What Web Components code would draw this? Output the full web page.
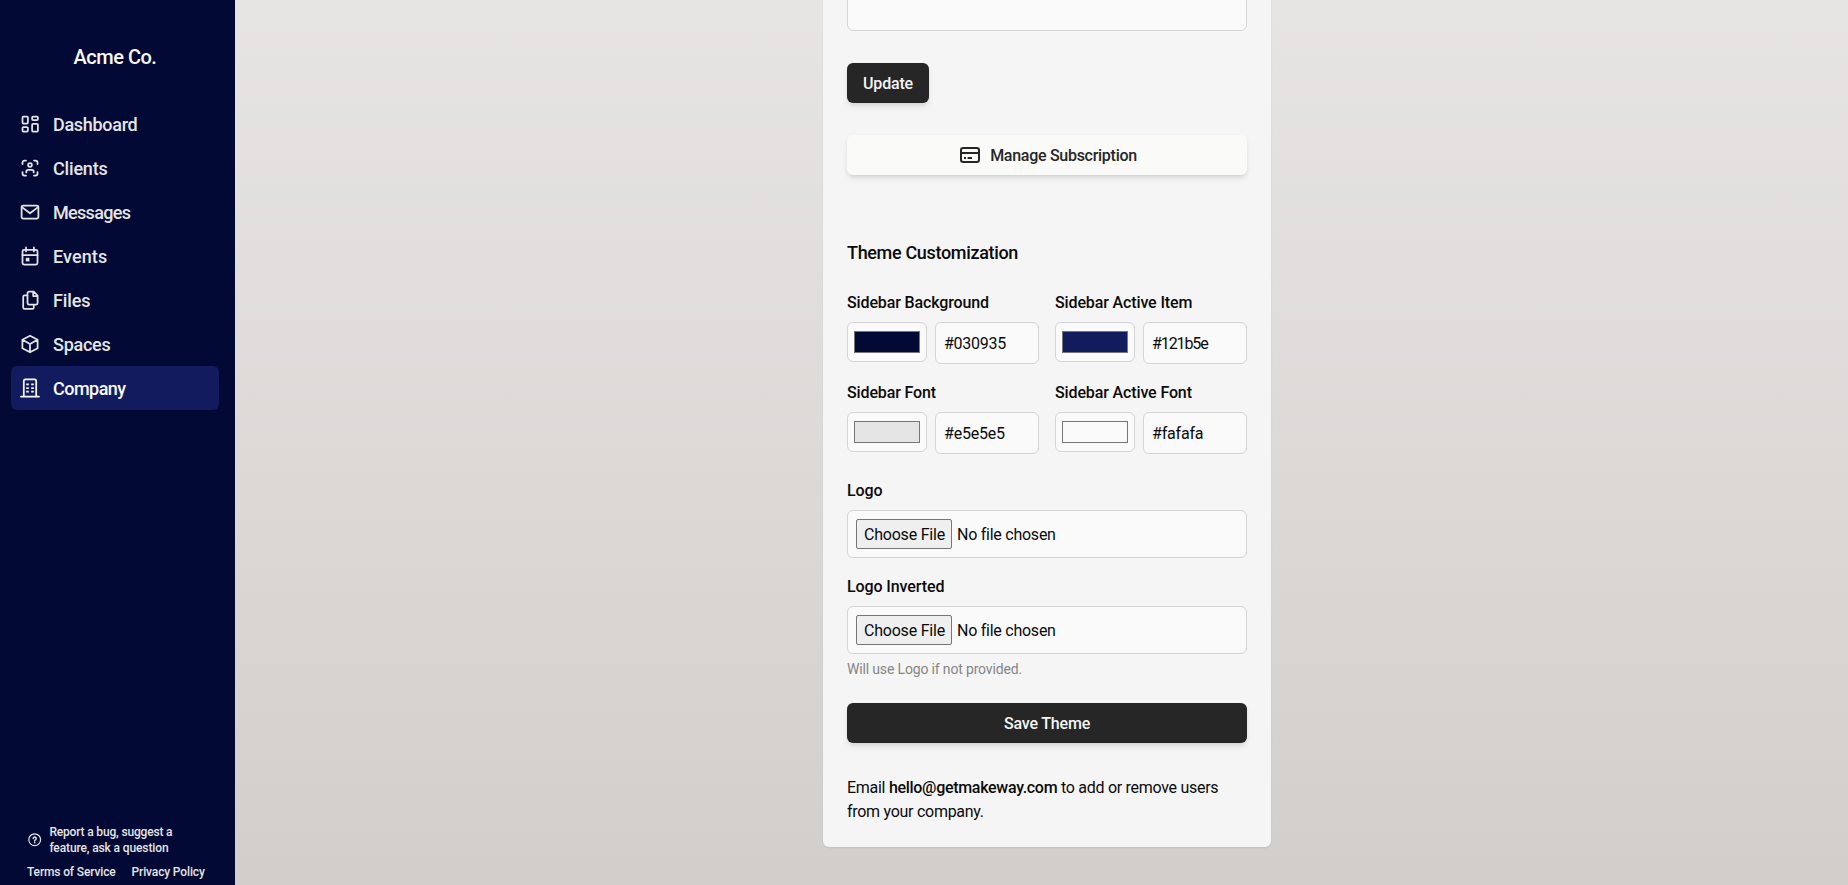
<!DOCTYPE html>
<html lang="en">
<head>
<meta charset="utf-8">
<title>Company</title>
<style>
    html, body {
        margin: 0;
        height: 100%;
        overflow: hidden;
    }
    body {
        font-family: Roboto, "Liberation Sans", sans-serif;
        font-size: 16px;
        line-height: 24px;
        color: #0a0a0a;
    }
</style>
</head>
<body>
<app-shell>
    <side-bar slot="sidebar" company="Acme Co.">
        <nav-item icon="dashboard" style="letter-spacing:-.3px">Dashboard</nav-item>
        <nav-item icon="clients" style="letter-spacing:-.18px">Clients</nav-item>
        <nav-item icon="messages" style="letter-spacing:-.68px">Messages</nav-item>
        <nav-item icon="events" style="letter-spacing:.1px">Events</nav-item>
        <nav-item icon="files" style="letter-spacing:-.1px">Files</nav-item>
        <nav-item icon="spaces" style="letter-spacing:-.25px">Spaces</nav-item>
        <nav-item icon="company" active style="letter-spacing:-.53px">Company</nav-item>
    </side-bar>
    <settings-card></settings-card>
</app-shell>

<script>
const ICONS = {
    dashboard: `<rect x="2.5" y="2.5" width="5.4" height="7" rx="1"/><rect x="2.5" y="13.1" width="5.4" height="4.4" rx="1"/>
        <rect x="12.1" y="2.5" width="5.8" height="3.6" rx="1"/><rect x="12.1" y="9.8" width="5.8" height="7.7" rx="1"/>`,
    clients: `<path d="M2.5 6V4.5a2 2 0 0 1 2-2H6M14 2.5h1.5a2 2 0 0 1 2 2V6M17.5 14v1.5a2 2 0 0 1-2 2H14M6 17.5H4.5a2 2 0 0 1-2-2V14"/>
        <circle cx="10" cy="7" r="1.9"/><path d="M6.3 14.4v-.6a2 2 0 0 1 2-2h3.4a2 2 0 0 1 2 2v.6"/>`,
    messages: `<rect x="1.6" y="3.5" width="16.8" height="13.2" rx="1.6"/><path d="M2.2 5.4 10 11.3l7.8-5.9"/>`,
    events: `<rect x="2.5" y="3.8" width="15" height="14.8" rx="1.6"/><path d="M2.5 9.2h15M6 1.4v4M13.9 1.4v4"/>
        <rect x="5.8" y="11.8" width="3.6" height="3.6" fill="currentColor" stroke="none"/>`,
    files: `<path d="M9 1.6h4.8l3.8 3.9V13a1.5 1.5 0 0 1-1.5 1.5H9A1.5 1.5 0 0 1 7.5 13V3.1A1.5 1.5 0 0 1 9 1.6zM13.2 1.8v4.3h4.2"/>
        <path d="M7.3 5.3H4.7a1.5 1.5 0 0 0-1.5 1.5v10.6a1.5 1.5 0 0 0 1.5 1.5h7.6a1.5 1.5 0 0 0 1.5-1.5v-2.6"/>`,
    spaces: `<path d="m10 1.7 7.6 4.1v8.4L10 18.3l-7.6-4.1V5.8zM2.4 5.8 10 10l7.6-4.2M10 10v8.3"/>`,
    company: `<path d="M3.8 18.4V3a1.6 1.6 0 0 1 1.6-1.6h9.2A1.6 1.6 0 0 1 16.2 3v15.4M1 18.5h18"/>
        <path d="M6.2 6.4h2.6M11.2 6.4h2.6M6.2 10h2.6M11.2 10h2.6M6.2 13.6h2.6M11.2 13.6h2.6" stroke-linecap="butt"/>`,
    card: `<rect x="1" y="3" width="18" height="14" rx="2.2" stroke-width="2"/><path d="M1 8h18M4 13h2M7.6 13H12" stroke-width="2" stroke-linecap="butt"/>`,
    help: `<circle cx="10" cy="10" r="8.8"/><path d="M7.8 8.2a2.2 2.2 0 1 1 3.2 2c-.7.4-1 .7-1 1.4M10 13.8v.8" stroke-width="2.2"/>`
};

customElements.define('ui-icon',
class extends HTMLElement {
    connectedCallback() {
        if (this.shadowRoot) { return; }
        this.attachShadow({mode: 'open'}).innerHTML = `
        <style>
            :host { display: block; width: 20px; height: 20px; flex: none; }
            svg { display: block; width: 100%; height: 100%; overflow: visible; }
        </style>
        <svg viewBox="0 0 20 20" fill="none" stroke="currentColor" stroke-width="1.75"
            stroke-linecap="round" stroke-linejoin="round">${ICONS[this.getAttribute('name')]}</svg>`;
    }
});

customElements.define('app-shell',
class extends HTMLElement {
    constructor() {
        super();
        this.attachShadow({mode: 'open'}).innerHTML = `
        <style>
            :host {
                display: flex;
                height: 100vh;
                overflow: hidden;
                background: #030935;
            }
            main {
                flex: 1;
                display: flex;
                justify-content: center;
                align-items: flex-end;
                padding: 0 0 38px 11px;
                box-sizing: border-box;
                background: linear-gradient(to bottom, #e7e5e4, #d2cecb);
            }
        </style>
        <slot name="sidebar"></slot>
        <main><slot></slot></main>`;
    }
});

customElements.define('side-bar',
class extends HTMLElement {
    constructor() {
        super();
        this.attachShadow({mode: 'open'}).innerHTML = `
        <style>
            :host {
                display: flex;
                flex-direction: column;
                flex: none;
                width: 235px;
                height: 100%;
                box-sizing: border-box;
                padding: 42px 16px 5px 11px;
                color: #e5e5e5;
                font-weight: 500;
            }
            h1 {
                margin: 0 0 30px;
                font-size: 20px;
                line-height: 30px;
                font-weight: 500;
                letter-spacing: -.5px;
                text-align: center;
                color: #fafafa;
            }
            nav { flex: 1; }
            footer {
                padding: 0 0 0 16px;
                font-size: 12px;
                line-height: 16px;
                white-space: nowrap;
            }
            .report {
                display: flex;
                align-items: center;
                gap: 8px;
                padding-left: 1px;
                margin-bottom: 8px;
            }
            .report ui-icon { width: 13.4px; height: 13.4px; }
            .report span { display: block; letter-spacing: -.17px; }
            .report span + span { letter-spacing: -.12px; }
            .legal { display: flex; gap: 16px; letter-spacing: -.14px; }
        </style>
        <h1></h1>
        <nav><slot></slot></nav>
        <footer>
            <div class="report">
                <ui-icon name="help"></ui-icon>
                <div><span>Report a bug, suggest a</span><span>feature, ask a question</span></div>
            </div>
            <div class="legal"><span>Terms of Service</span><span>Privacy Policy</span></div>
        </footer>`;
    }

    connectedCallback() {
        this.shadowRoot.querySelector('h1').textContent = this.getAttribute('company');
    }
});

customElements.define('nav-item',
class extends HTMLElement {
    connectedCallback() {
        if (this.shadowRoot) { return; }
        this.attachShadow({mode: 'open'}).innerHTML = `
        <style>
            :host {
                display: flex;
                align-items: center;
                gap: 13px;
                height: 44px;
                box-sizing: border-box;
                padding-left: 9px;
                border-radius: 6px;
                font-size: 18px;
                line-height: 28px;
            }
            :host([active]) { background: #121b5e; color: #fafafa; }
            span { padding-top: 1px; }
        </style>
        <ui-icon name="${this.getAttribute('icon')}"></ui-icon>
        <span><slot></slot></span>`;
    }
});

customElements.define('ui-button',
class extends HTMLElement {
    constructor() {
        super();
        this.attachShadow({mode: 'open'}).innerHTML = `
        <style>
            :host {
                display: flex;
                align-items: center;
                justify-content: center;
                gap: 10px;
                height: 40px;
                box-sizing: border-box;
                padding: 0 16px;
                border-radius: 6px;
                background: #262626;
                color: #f5f5f5;
                font-weight: 500;
                letter-spacing: -.18px;
                box-shadow: 0 4px 6px -1px rgba(0,0,0,.1), 0 2px 4px -2px rgba(0,0,0,.1);
            }
            :host([light]) {
                padding-left: 19px;
                background: #fafaf9;
                color: #262626;
                letter-spacing: -.28px;
            }
            span { padding-top: 1px; white-space: nowrap; }
        </style>
        <slot name="icon"></slot><span><slot></slot></span>`;
    }
});

customElements.define('color-field',
class extends HTMLElement {
    connectedCallback() {
        if (this.shadowRoot) { return; }
        var value = this.getAttribute('value');
        this.attachShadow({mode: 'open'}).innerHTML = `
        <style>
            :host { display: block; width: 192px; }
            label {
                display: block;
                margin-bottom: 7px;
                font-weight: 500;
                letter-spacing: -.13px;
            }
            .row { display: flex; align-items: flex-start; gap: 8px; }
            .swatch, .value {
                box-sizing: border-box;
                border: 1px solid #d4d4d4;
                border-radius: 6px;
                background: #fafafa;
            }
            .swatch { width: 80px; height: 40px; padding: 8px 6px; }
            .swatch div {
                height: 22px;
                box-sizing: border-box;
                border: 1px solid #767676;
                background: ${value};
            }
            .value { flex: 1; height: 42px; padding: 9px 8px 7px; letter-spacing: var(--track, -.2px); }
        </style>
        <label><slot></slot></label>
        <div class="row">
            <div class="swatch"><div></div></div>
            <div class="value">${value}</div>
        </div>`;
    }
});

customElements.define('file-field',
class extends HTMLElement {
    constructor() {
        super();
        this.attachShadow({mode: 'open'}).innerHTML = `
        <style>
            :host { display: block; }
            label {
                display: block;
                margin-bottom: 7px;
                font-weight: 500;
                letter-spacing: -.1px;
            }
            .box {
                display: flex;
                align-items: center;
                gap: 5px;
                height: 48px;
                box-sizing: border-box;
                padding: 0 8px;
                border: 1px solid #d4d4d4;
                border-radius: 6px;
                background: #fafafa;
            }
            button {
                width: 96px;
                height: 30px;
                box-sizing: border-box;
                margin: 0;
                padding: 1px 0 0 1px;
                border: 1px solid #767676;
                border-radius: 2px;
                background: #efefef;
                color: #0a0a0a;
                font: inherit;
                letter-spacing: -.2px;
                white-space: nowrap;
            }
            .name { padding-top: 1px; letter-spacing: -.25px; }
            .hint {
                display: block;
                margin-top: 5px;
                font-size: 14px;
                line-height: 20px;
                letter-spacing: -.16px;
                color: #858585;
            }
        </style>
        <label><slot></slot></label>
        <div class="box"><button>Choose File</button><span class="name">No file chosen</span></div>
        <slot name="hint" class="hint"></slot>`;
    }
});

customElements.define('settings-card',
class extends HTMLElement {
    constructor() {
        super();
        this.attachShadow({mode: 'open'}).innerHTML = `
        <style>
            :host {
                display: block;
                width: 448px;
                box-sizing: border-box;
                padding: 24px 24px 23px;
                border-radius: 6px;
                background: #f5f5f5;
                box-shadow: 0 1px 2px rgba(0,0,0,.08);
            }
            .notes {
                height: 96px;
                box-sizing: border-box;
                border: 1px solid #d4d4d4;
                border-radius: 6px;
                background: #fafafa;
                margin-bottom: 32px;
            }
            .update { width: 82px; margin-bottom: 32px; }
            h2 {
                margin: 64px 0 24px;
                font-size: 18px;
                line-height: 28px;
                font-weight: 500;
                letter-spacing: -.33px;
            }
            .colors { display: grid; grid-template-columns: 192px 192px; gap: 17px 16px; }
            .logo { margin: 25px 0 17px; }
            .save { margin: 24px 0 33px; }
            p { margin: 0; letter-spacing: -.28px; }
            p b { font-weight: 500; letter-spacing: -.3px; }
        </style>
        <div class="notes"></div>
        <ui-button class="update">Update</ui-button>
        <ui-button light><ui-icon slot="icon" name="card"></ui-icon>Manage Subscription</ui-button>
        <h2>Theme Customization</h2>
        <div class="colors">
            <color-field value="#030935" style="--track:-.26px">Sidebar Background</color-field>
            <color-field value="#121b5e" style="--track:-1.1px">Sidebar Active Item</color-field>
            <color-field value="#e5e5e5">Sidebar Font</color-field>
            <color-field value="#fafafa">Sidebar Active Font</color-field>
        </div>
        <file-field class="logo">Logo</file-field>
        <file-field>Logo Inverted<span slot="hint">Will use Logo if not provided.</span></file-field>
        <ui-button class="save">Save Theme</ui-button>
        <p>Email <b>hello@getmakeway.com</b> to add or remove users<br>from your company.</p>`;
    }
});
</script>
</body>
</html>
